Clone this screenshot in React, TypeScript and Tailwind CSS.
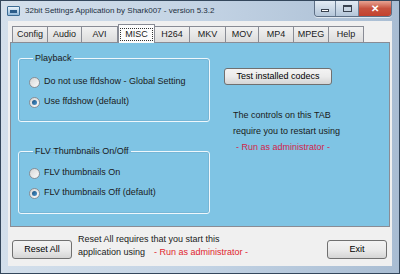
import React from 'react';

const tabs = [
  { name: 'Config', w: 'w-[36px]' },
  { name: 'Audio', w: 'w-[34px]' },
  { name: 'AVI', w: 'w-[36px]' },
  { name: 'MISC', w: 'w-[37px]', active: true },
  { name: 'H264', w: 'w-[35px]' },
  { name: 'MKV', w: 'w-[36px]' },
  { name: 'MOV', w: 'w-[33px]' },
  { name: 'MP4', w: 'w-[35px]' },
  { name: 'MPEG', w: 'w-[35px]' },
  { name: 'Help', w: 'w-[35px]' },
];

const Radio = ({ checked, label }: { checked?: boolean; label: string }) => (
  <div className="flex h-[20px] items-center gap-[4px]">
    <span className="flex h-[11px] w-[11px] items-center justify-center rounded-full border border-[#8a8f96] bg-gradient-to-br from-[#d6d6d6] to-[#fbfbfb]">
      {checked && <span className="h-[5px] w-[5px] rounded-full bg-gradient-to-br from-[#1d4f7a] to-[#4c9ad6]" />}
    </span>
    <span>{label}</span>
  </div>
);

const Button = ({ label, className }: { label: string; className: string }) => (
  <button className={`flex items-center justify-center rounded-[3px] border border-[#707070] bg-gradient-to-b from-[#f3f3f3] via-[#ebebeb] to-[#d5d5d5] text-[9px] text-black ${className}`}>
    {label}
  </button>
);

const GroupBox = ({ title, className, children }: { title: string; className: string; children: React.ReactNode }) => (
  <fieldset className={`rounded-[3px] border border-[#eef7fc] pl-[10px] shadow-[inset_0_0_0_1px_rgba(90,140,170,0.25)] ${className}`}>
    <legend className="ml-[4px] px-[2px] leading-[11px]">{title}</legend>
    {children}
  </fieldset>
);

export default function App() {
  return (
    <div
      className="flex h-[274px] w-[400px] flex-col overflow-hidden border border-[#34475c] bg-gradient-to-r from-[#d3dfeb] via-[#c3d3e4] to-[#a9bdd3] text-[9px] text-[#1a1a1a]"
      style={{ fontFamily: '"Liberation Sans", Arial, sans-serif' }}
    >
      {/* title bar */}
      <div className="flex h-[20px] shrink-0 items-start">
        <div className="ml-[6px] mt-[5px] flex h-[10px] w-[13px] items-center justify-center rounded-[1px] border border-[#3b6b94] bg-gradient-to-b from-[#e9f3fb] to-[#8fb7d8]">
          <div className="h-[3px] w-[7px] bg-[#2c5d8a]" />
        </div>
        <span className="ml-[5px] mt-[4px] text-[8px] leading-[12px] text-[#23303e]">
          32bit Settings Application by Shark007 - version 5.3.2
        </span>
        <div className="ml-auto mr-[7px] flex h-[16px] overflow-hidden rounded-b-[4px] border border-t-0 border-[#5d6f85] shadow-[0_1px_0_rgba(255,255,255,0.6)]">
          <div className="flex w-[21px] items-end justify-center border-r border-[#6f8197] bg-gradient-to-b from-[#e3ebf4] to-[#b4c6d9] pb-[4px]">
            <div className="h-[3px] w-[8px] border border-[#3a4350] bg-white" />
          </div>
          <div className="flex w-[23px] items-center justify-center border-r border-[#6f8197] bg-gradient-to-b from-[#e3ebf4] to-[#b4c6d9]">
            <div className="h-[7px] w-[9px] border border-[#3a4350] border-t-[2px] bg-[#c9d6e3]" />
          </div>
          <div className="flex w-[32px] items-center justify-center bg-gradient-to-b from-[#e8a393] via-[#c7523f] to-[#c3412e] text-[10px] font-bold leading-none text-white">
            ✕
          </div>
        </div>
      </div>

      {/* client area */}
      <div className="mx-[7px] flex h-[245px] flex-col bg-[#f0f0f0]">
        <div className="flex h-[21px] items-end pl-[4px]">
          {tabs.map((t) =>
            t.active ? (
              <div
                key={t.name}
                className={`relative z-10 -mb-[1px] flex h-[19px] ${t.w} items-center justify-center border border-b-0 border-[#898c95] bg-[#fcfcfc]`}
              >
                <span className="border border-dotted border-[#333] px-[4px] leading-[11px]">{t.name}</span>
              </div>
            ) : (
              <div
                key={t.name}
                className={`flex h-[16px] ${t.w} items-center justify-center border border-b-0 border-l-0 border-[#898c95] bg-gradient-to-b from-[#f2f2f2] to-[#dcdcdc] first:border-l`}
              >
                {t.name}
              </div>
            )
          )}
        </div>

        {/* tab panel */}
        <div className="mx-[2px] flex h-[185px] border border-[#898c95] bg-[#7fc4e4] pl-[7px] pt-[10px]">
          <div className="flex w-[192px] flex-col">
            <GroupBox title="Playback" className="h-[69px]">
              <div className="mt-[8px]">
                <Radio label="Do not use ffdshow - Global Setting" />
                <Radio checked label="Use ffdshow (default)" />
              </div>
            </GroupBox>
            <GroupBox title="FLV Thumbnails On/Off" className="mt-[24px] h-[68px]">
              <div className="mt-[6px]">
                <Radio label="FLV thumbnails On" />
                <Radio checked label="FLV thumbnails Off (default)" />
              </div>
            </GroupBox>
          </div>
          <div className="ml-[14px] mt-[15px] flex flex-col">
            <Button label="Test installed codecs" className="h-[17px] w-[108px]" />
            <div className="mt-[22px] pl-[9px] leading-[16px]">
              <div>The controls on this TAB</div>
              <div>require you to restart using</div>
              <div className="pl-[3px] text-[#d2234a]">- Run as administrator -</div>
            </div>
          </div>
        </div>

        {/* bottom area */}
        <div className="flex pt-[6px]">
          <Button label="Reset All" className="ml-[4px] mt-[7px] h-[19px] w-[60px]" />
          <div className="ml-[6px] leading-[13px]">
            <div>Reset All requires that you start this</div>
            <div>
              application using<span className="ml-[9px] text-[#e0242e]">- Run as administrator -</span>
            </div>
          </div>
          <Button label="Exit" className="ml-auto mr-[5px] mt-[7px] h-[19px] w-[60px]" />
        </div>
      </div>
    </div>
  );
}
